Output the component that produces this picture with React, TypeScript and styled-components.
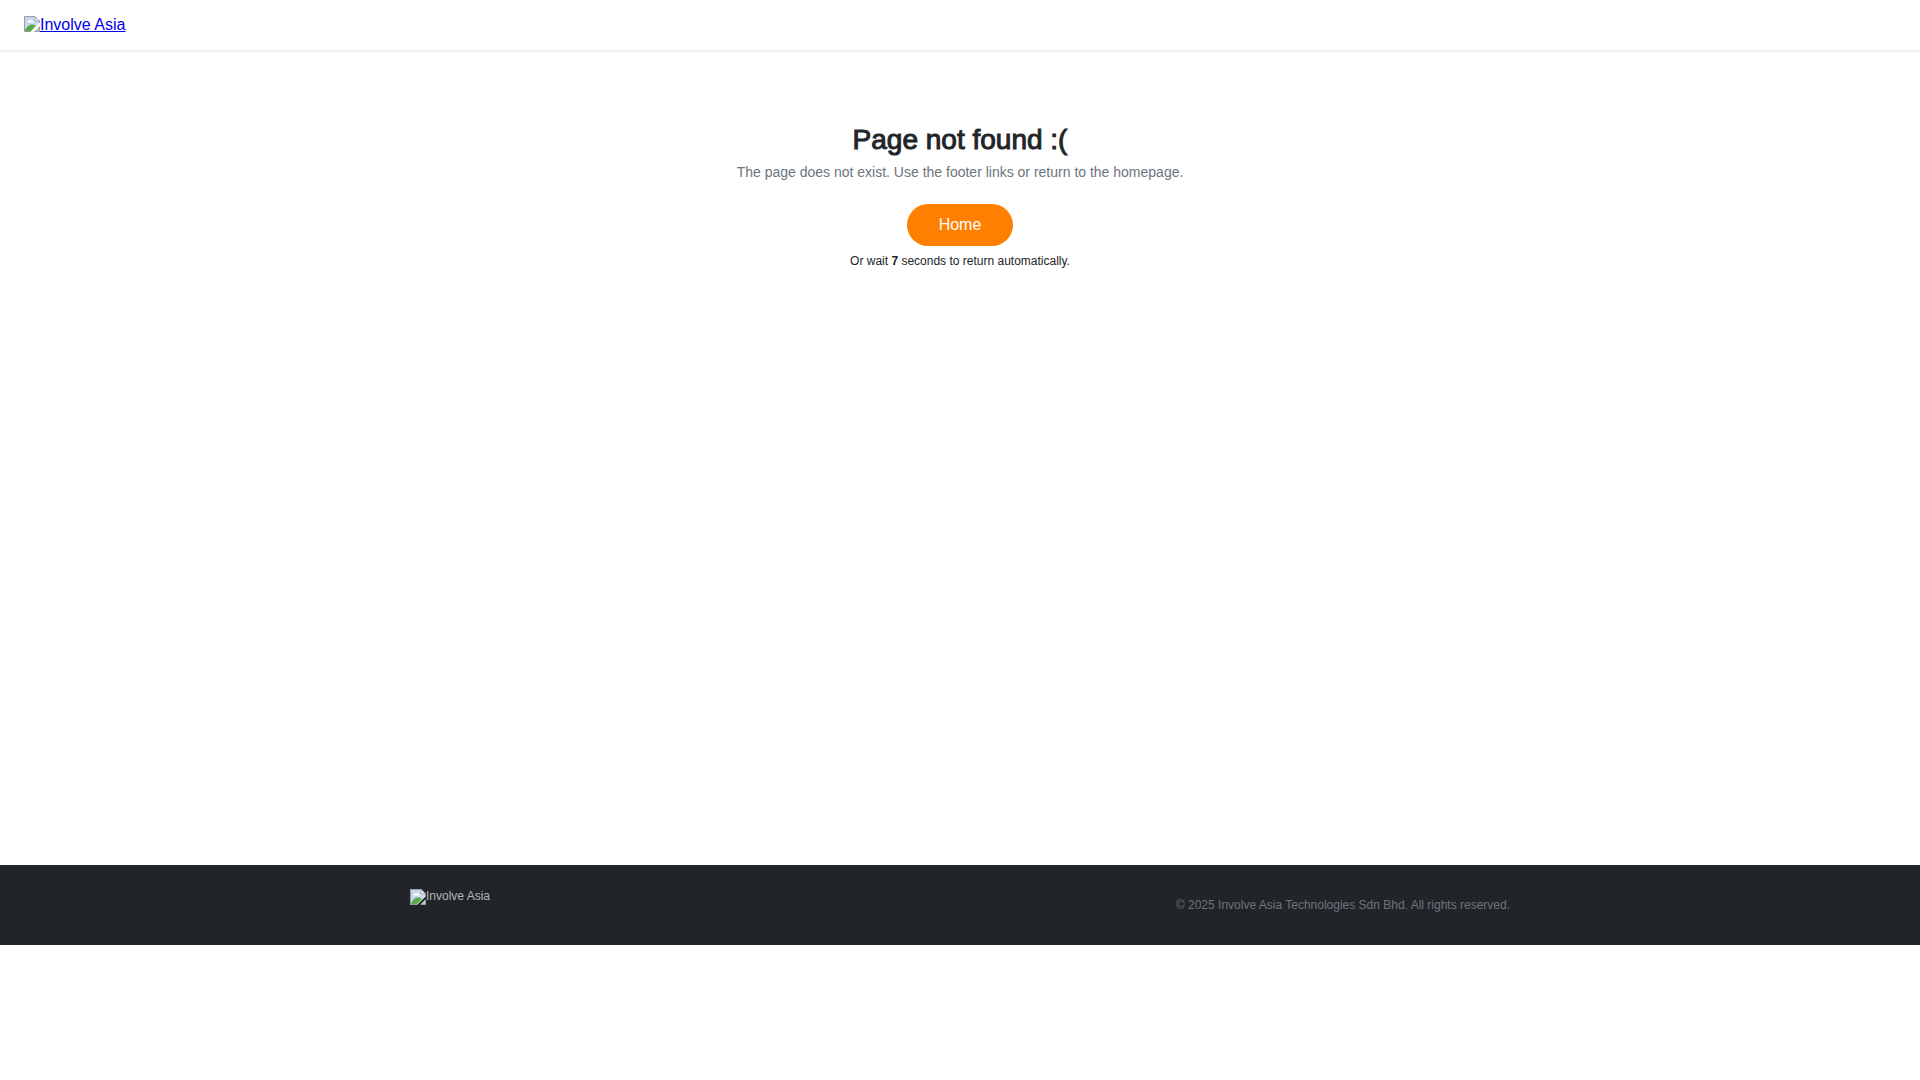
import React, { useEffect, useState } from "react";
import styled, { createGlobalStyle } from "styled-components";

const GlobalStyle = createGlobalStyle`
  *, *::before, *::after { box-sizing: border-box; }
  body {
    margin: 0;
    background: #fff;
    color: #212529;
    font-family: "Liberation Sans", Arial, sans-serif;
    font-size: 16px;
  }
`;

const Header = styled.header`
  display: flex;
  align-items: flex-start;
  height: 50px;
  padding: 16px 24px;
  background: #fff;
  box-shadow: 0 0 4px rgba(0, 0, 0, 0.2);
`;

const LogoLink = styled.a`
  display: flex;
  color: #0000ee;
  line-height: 18px;
  text-decoration: underline;
`;

const LogoIcon = styled.svg`
  flex: none;
  width: 16px;
  height: 16px;
`;

const Main = styled.main`
  display: flex;
  flex-direction: column;
  align-items: center;
  min-height: 815px;
  padding: 72px 24px 24px;
  text-align: center;
`;

const Title = styled.h1`
  margin: 0;
  font-size: 28px;
  font-weight: 400;
  line-height: 36px;
  -webkit-text-stroke: 1px currentColor;
`;

const Lead = styled.p`
  margin: 6px 0 24px;
  color: #6c757d;
  font-size: 14px;
  line-height: 16px;
`;

const HomeButton = styled.button`
  height: 42px;
  padding: 0 32px;
  border: 0;
  border-radius: 21px;
  background: #ff8000;
  color: #fff;
  font: inherit;
  cursor: pointer;
`;

const Countdown = styled.p`
  margin: 8px 0 0;
  font-size: 12px;
  line-height: 14px;
`;

const Footer = styled.footer`
  padding: 24px;
  background: #212529;
  font-size: 12px;
`;

const FooterInner = styled.div`
  display: flex;
  justify-content: space-between;
  align-items: flex-start;
  max-width: 1100px;
  min-height: 32px;
  margin: 0 auto;
`;

const FooterLogo = styled.div`
  display: flex;
  color: #b5b7b9;
  line-height: 14px;
`;

const Copyright = styled.p`
  margin: 0;
  color: #6c757d;
  line-height: 32px;
`;

function PictureIcon() {
  return (
    <LogoIcon viewBox="0 0 16 16" aria-hidden="true">
      <path d="M0 0H11L16 5V7L7 16H0Z" fill="#fff" />
      <path d="M1 1H10.5V5.5H15V7L7 15H1Z" fill="#c6d7f5" />
      <path d="M3 6.500c0-1 .8-1.700 1.700-1.500C5.200 3.500 7.500 3.600 8 5c1.200 0 1.700.6 1.700 1.500Z" fill="#fff" />
      <path d="M1 14C3 10.500 5 8.500 8 8.500c1.500 0 2.700.4 3.800 1.600L7 15H1Z" fill="#57aa44" />
      <path d="M11 1V5H15Z" fill="#fff" />
      <path d="M.5 15.500V.5H11L15.500 5v2M11 .5V5h4.500M.5 15.500H7" fill="none" stroke="#9a9da0" />
      <path d="M10 16L16 10V16Z" fill="#9a9da0" />
      <path d="M11 15L15 11V15Z" fill="#b4d4b0" />
    </LogoIcon>
  );
}

export default function App() {
  const [seconds] = useState(7);

  useEffect(() => {
    document.title = "Page not found";
  }, []);

  return (
    <>
      <GlobalStyle />
      <Header>
        <LogoLink href="#">
          <PictureIcon />
          <span>Involve Asia</span>
        </LogoLink>
      </Header>
      <Main>
        <Title>Page not found :(</Title>
        <Lead>The page does not exist. Use the footer links or return to the homepage.</Lead>
        <HomeButton type="button">Home</HomeButton>
        <Countdown>
          Or wait <strong>{seconds}</strong> seconds to return automatically.
        </Countdown>
      </Main>
      <Footer>
        <FooterInner>
          <FooterLogo>
            <PictureIcon />
            <span>Involve Asia</span>
          </FooterLogo>
          <Copyright>© 2025 Involve Asia Technologies Sdn Bhd. All rights reserved.</Copyright>
        </FooterInner>
      </Footer>
    </>
  );
}
